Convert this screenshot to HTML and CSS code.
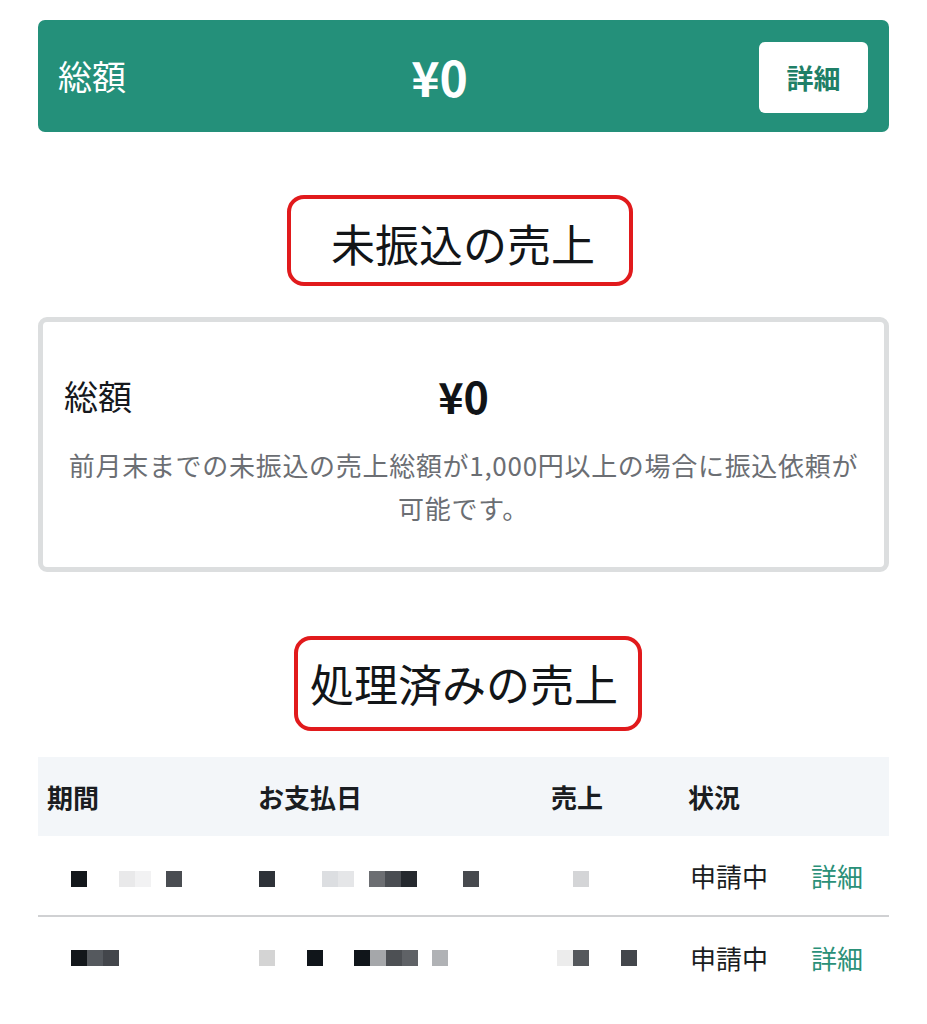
FILE: index.html
```html
<!DOCTYPE html>
<html lang="ja">
<head>
<meta charset="utf-8">
<title>売上</title>
<link rel="stylesheet" href="styles.css">
</head>
<body>
<div class="page">
  <div class="total-bar">
    <span class="total-label">総額</span>
    <span class="total-value">¥0</span>
    <button class="detail-btn">詳細</button>
  </div>

  <div class="section-title">
    <h2 class="title-box title-box--first">未振込の売上</h2>
  </div>

  <div class="card">
    <div class="card-row">
      <span class="card-label">総額</span>
      <span class="card-value">¥0</span>
      <span></span>
    </div>
    <p class="card-note">前月末までの未振込の売上総額が1,000円以上の場合に振込依頼が<br>可能です。</p>
  </div>

  <div class="section-title section-title--second">
    <h2 class="title-box title-box--second">処理済みの売上</h2>
  </div>

  <div class="table">
    <div class="t-row t-head">
      <div class="c1">期間</div>
      <div class="c2">お支払日</div>
      <div class="c3">売上</div>
      <div class="c4">状況</div>
      <div class="c5"></div>
    </div>
    <div class="t-row t-body t-line">
      <div class="c1 m1"><svg width="112" height="22"><rect x="0" y="6" width="16" height="16" fill="#13171b"/><rect x="48" y="6" width="16" height="16" fill="#e9e9ea"/><rect x="64" y="6" width="16" height="16" fill="#f2f2f3"/><rect x="95" y="6" width="16" height="16" fill="#4a4d52"/></svg></div>
      <div class="c2 m2"><svg width="224" height="22"><rect x="0" y="6" width="16" height="16" fill="#2e3238"/><rect x="63" y="6" width="16" height="16" fill="#dcdee1"/><rect x="79" y="6" width="16" height="16" fill="#e5e6e8"/><rect x="110" y="6" width="16" height="16" fill="#6c6e72"/><rect x="126" y="6" width="16" height="16" fill="#4a4d52"/><rect x="142" y="6" width="16" height="16" fill="#25292e"/><rect x="204" y="6" width="16" height="16" fill="#474a4e"/></svg></div>
      <div class="c3 m3"><svg width="80" height="22"><rect x="16" y="6" width="16" height="16" fill="#d4d5d7"/></svg></div>
      <div class="c4 status">申請中</div>
      <div class="c5"><a class="link">詳細</a></div>
    </div>
    <div class="t-row t-body">
      <div class="c1 m1"><svg width="112" height="16"><rect x="0" y="0" width="16" height="16" fill="#13171b"/><rect x="16" y="0" width="16" height="16" fill="#55595e"/><rect x="32" y="0" width="16" height="16" fill="#43464b"/></svg></div>
      <div class="c2 m2"><svg width="224" height="16"><rect x="0" y="0" width="16" height="16" fill="#d4d4d4"/><rect x="48" y="0" width="16" height="16" fill="#10151a"/><rect x="95" y="0" width="16" height="16" fill="#10151a"/><rect x="111" y="0" width="16" height="16" fill="#a5a7aa"/><rect x="127" y="0" width="16" height="16" fill="#4d5054"/><rect x="143" y="0" width="16" height="16" fill="#5f6266"/><rect x="173" y="0" width="16" height="16" fill="#b0b2b5"/></svg></div>
      <div class="c3 m3"><svg width="80" height="16"><rect x="0" y="0" width="16" height="16" fill="#ececec"/><rect x="16" y="0" width="16" height="16" fill="#55585c"/><rect x="64" y="0" width="16" height="16" fill="#43464b"/></svg></div>
      <div class="c4 status">申請中</div>
      <div class="c5"><a class="link">詳細</a></div>
    </div>
  </div>
</div>
</body>
</html>
```

FILE: styles.css
```css
* { box-sizing: border-box; }

html, body {
  margin: 0;
  padding: 0;
  background: #ffffff;
}

body {
  font-family: "Noto Sans CJK JP", "Noto Sans", sans-serif;
  color: #16191d;
}

.page {
  width: 927px;
  padding: 20px 38px 0 38px;
}

/* Top total bar */
.total-bar {
  height: 112px;
  background: #24907a;
  border-radius: 7px;
  display: flex;
  align-items: center;
  justify-content: space-between;
  padding: 0 21px 0 20px;
}

.total-label {
  font-size: 34px;
  color: #ffffff;
  line-height: 1;
}

.total-value {
  font-size: 48px;
  font-weight: 700;
  color: #ffffff;
  line-height: 1;
  margin-right: 6px;
}

.detail-btn {
  width: 109px;
  height: 71px;
  border: none;
  border-radius: 6px;
  background: #ffffff;
  color: #1f7f67;
  font-family: inherit;
  font-size: 27px;
  font-weight: 700;
  padding: 0;
  margin-top: 2px;
}

/* Section titles with red annotation frames */
.section-title {
  display: flex;
  justify-content: center;
  margin-top: 63px;
}

.section-title--second {
  margin-top: 64px;
}

.title-box {
  margin: 0;
  border: 4px solid #e11a1c;
  border-radius: 17px;
  font-size: 44px;
  font-weight: 400;
  line-height: 66px;
  color: #121518;
}

.title-box--first {
  padding: 11px 34px 6px 40px;
  margin-right: 7px;
}

.title-box--second {
  padding: 10px 20px 11px 12px;
  margin-left: 9px;
}

/* Unpaid card */
.card {
  margin-top: 31px;
  border: 5px solid #dcdedf;
  border-radius: 9px;
  padding: 42px 21px 38px 21px;
}

.card-row {
  display: grid;
  grid-template-columns: 1fr auto 1fr;
  align-items: center;
  height: 50px;
}

.card-label {
  font-size: 34px;
  color: #16191d;
}

.card-value {
  font-size: 43px;
  font-weight: 700;
  color: #111417;
}

.card-note {
  margin: 29px 0 0 0;
  text-align: center;
  font-size: 26px;
  line-height: 43px;
  color: #6b6e73;
  letter-spacing: 0.7px;
}

/* Processed table */
.table {
  margin-top: 26px;
}

.t-row {
  display: grid;
  grid-template-columns: 211px 293px 137px 123px 87px;
  align-items: center;
}

.t-head {
  height: 79px;
  background: #f3f6f9;
  font-size: 26px;
  font-weight: 700;
  color: #1a1d21;
}

.t-head > div {
  padding-left: 9px;
}

.t-body {
  height: 81px;
  font-size: 26px;
  color: #1a1d21;
}

.t-line {
  border-bottom: 2px solid #d0d1d3;
}

.t-body > div {
  display: flex;
  align-items: center;
}

.t-body svg {
  display: block;
}

.t-body .m1 { padding-left: 33px; }
.t-body .m2 { padding-left: 10px; }
.t-body .m3 { padding-left: 15px; }
.t-body .status { padding-left: 11px; }
.t-body .c5 { padding-left: 9px; }

.link {
  color: #2a9078;
  text-decoration: none;
}
```
